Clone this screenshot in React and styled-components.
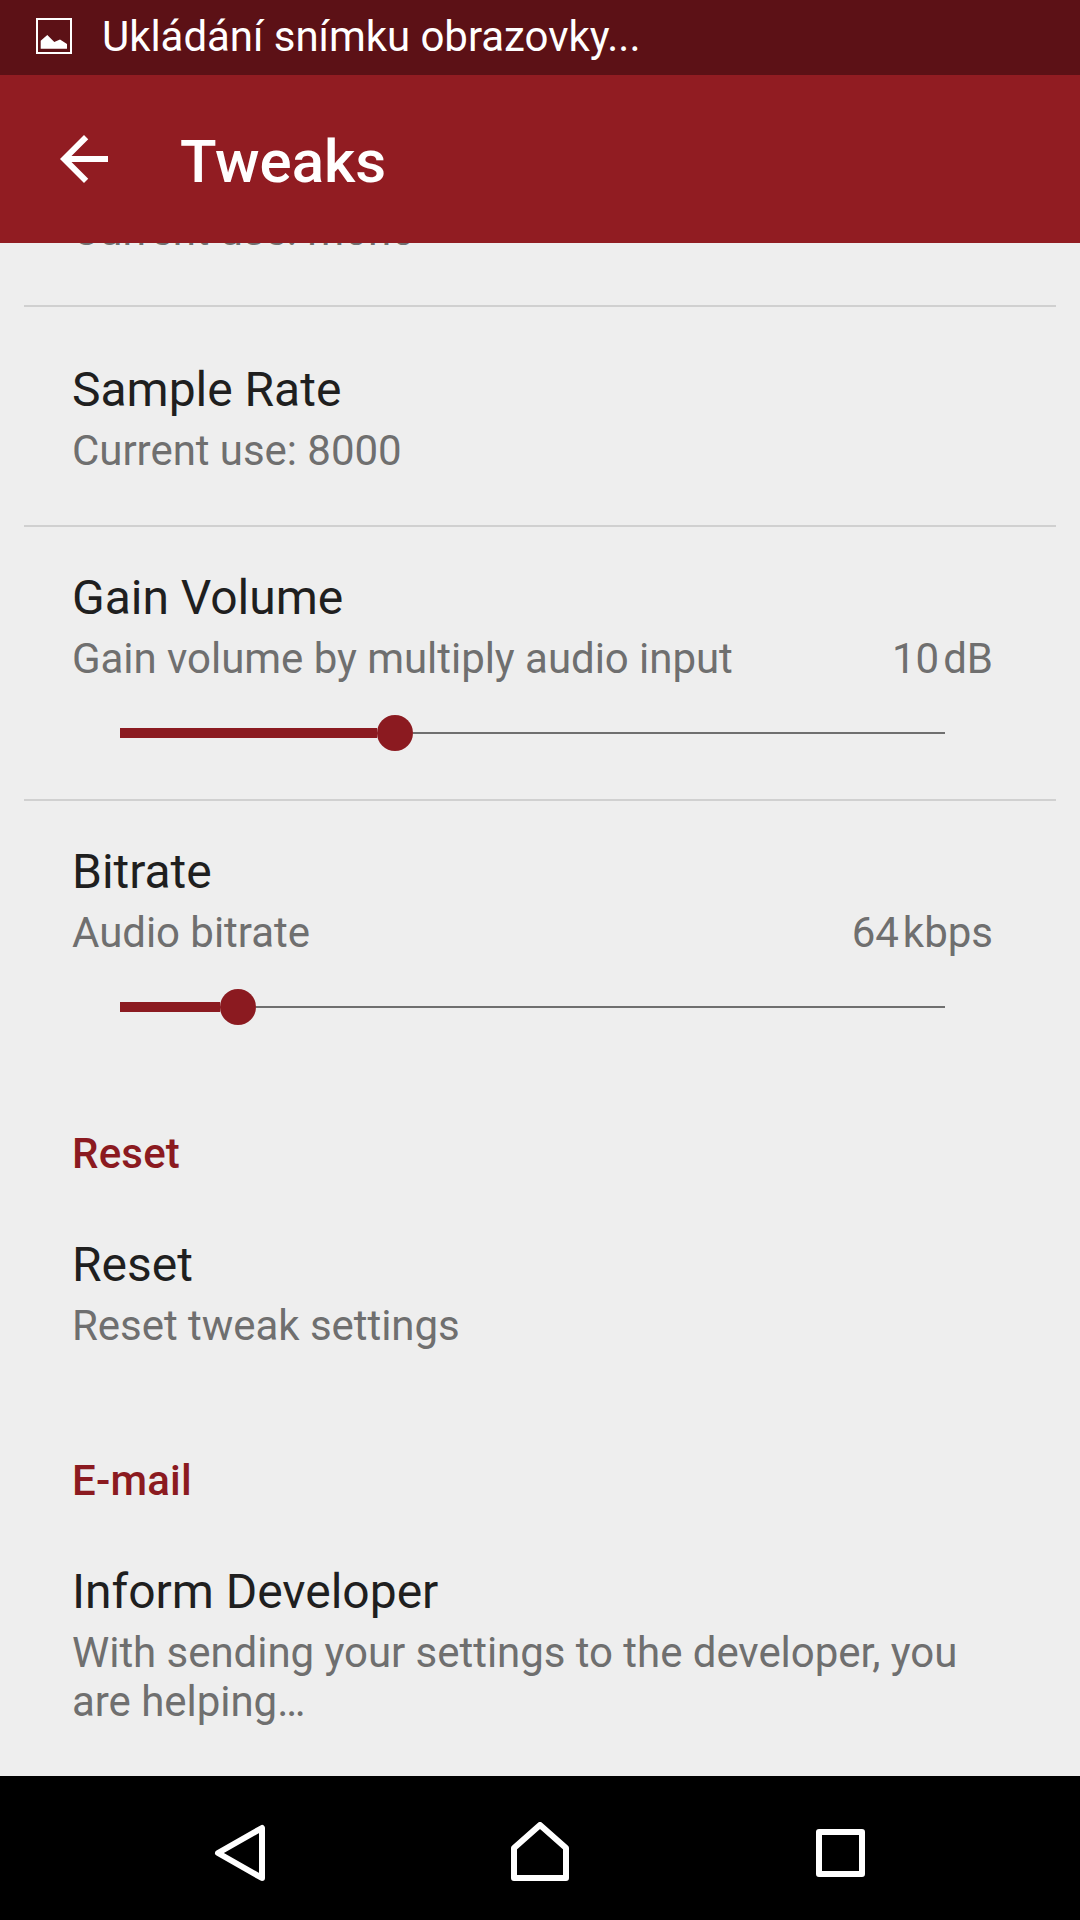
import React from "react";
import styled, { createGlobalStyle } from "styled-components";


const GlobalStyle = createGlobalStyle`
  * {
    box-sizing: border-box;
  }
  body {
    margin: 0;
    font-family: Roboto, "Liberation Sans", sans-serif;
  }
`

//Preference title with its summary, and the current value on the right if it has one
const Preference = ({ title, summary, value, unit }) => (
  <div>
    <Title>{title}</Title>
    <SummaryRow>
      <Summary>{summary}</Summary>
      {value && (
        <Value>
          <span>{value}</span>
          <span>{unit}</span>
        </Value>
      )}
    </SummaryRow>
  </div>
)

const Slider = ({ value, max }) => {
  const percent = (value / max) * 100;

  return (
    <Track>
      <TrackFill style={{ width: `calc(${percent}% - 18px)` }} />
      <Thumb />
      <TrackRest />
    </Track>
  )
}

const App = () => {
  return (
    <Screen>
      <GlobalStyle />
      <StatusBar>
        <svg width="36" height="36" viewBox="0 0 36 36" fill="none">
          <rect x="1" y="1" width="34" height="34" stroke="#fff" strokeWidth="2" />
          <path d="M4.7 30.7V22.7L11.3 17L18.3 24L24 21.5L31 26V30.7Z" fill="#fff" />
        </svg>
        <StatusText>Ukládání snímku obrazovky...</StatusText>
      </StatusBar>
      <Toolbar>
        <svg width="48" height="48" viewBox="0 0 16 16" fill="#fff">
          <path d="M16 7H3.83l5.59-5.59L8 0 0 8l8 8 1.41-1.41L3.83 9H16z" />
        </svg>
        <ToolbarTitle>Tweaks</ToolbarTitle>
      </Toolbar>
      <Content>
        <ClippedItem>
          <Summary>Current use: mono</Summary>
        </ClippedItem>
        <Divider />
        <Item $top={55} $bottom={50}>
          <Preference title="Sample Rate" summary="Current use: 8000" />
        </Item>
        <Divider />
        <Item $top={43} $bottom={48}>
          <Preference title="Gain Volume" summary="Gain volume by multiply audio input" value="10" unit="dB" />
          <Slider value={10} max={30} />
        </Item>
        <Divider />
        <Item $top={43} $bottom={48}>
          <Preference title="Bitrate" summary="Audio bitrate" value="64" unit="kbps" />
          <Slider value={1} max={7} />
        </Item>
        <Category>Reset</Category>
        <Item $top={55} $bottom={50}>
          <Preference title="Reset" summary="Reset tweak settings" />
        </Item>
        <Category>E-mail</Category>
        <Item $top={55} $bottom={50}>
          <Preference title="Inform Developer" summary="With sending your settings to the developer, you are helping…" />
        </Item>
      </Content>
      <NavBar>
        <svg width="60" height="60" viewBox="0 0 60 60" fill="none" stroke="#fff" strokeWidth="6" strokeLinejoin="round">
          <path d="M52 6V56L8 31Z" />
        </svg>
        <svg width="60" height="60" viewBox="0 0 60 60" fill="none" stroke="#fff" strokeWidth="6" strokeLinejoin="round">
          <path d="M4 56V26L30 3L56 26V56Z" />
        </svg>
        <svg width="60" height="60" viewBox="0 0 60 60" fill="none" stroke="#fff" strokeWidth="6" strokeLinejoin="round">
          <rect x="9" y="10" width="43" height="42" />
        </svg>
      </NavBar>
    </Screen>
  )
}

const Screen = styled.div`
  display: flex;
  flex-direction: column;
  width: 1080px;
  height: 1920px;
  overflow: hidden;
  background-color: #eeeeee;
`

const StatusBar = styled.div`
  display: flex;
  align-items: center;
  flex-shrink: 0;
  height: 75px;
  padding: 0 36px 3px;
  gap: 30px;
  background-color: #5c1116;
`

const StatusText = styled.span`
  padding-top: 2px;
  color: #fff;
  font-size: 42px;
  line-height: 50px;
  letter-spacing: -0.04px;
  white-space: nowrap;
`

const Toolbar = styled.header`
  display: flex;
  align-items: center;
  flex-shrink: 0;
  height: 168px;
  padding: 0 60px;
  gap: 72px;
  background-color: #911c22;
`

const ToolbarTitle = styled.h1`
  margin: 0;
  padding-top: 5px;
  color: #fff;
  font-size: 60px;
  font-weight: 500;
  line-height: 70px;
`

const Content = styled.main`
  flex: 1;
  min-height: 0;
  overflow: hidden;
`

/* Scrolled under the toolbar, only the bottom of its text shows */
const ClippedItem = styled.div`
  display: flex;
  align-items: flex-end;
  height: 62px;
  padding: 0 72px 50px;
`

const Divider = styled.hr`
  height: 2px;
  margin: 0 24px;
  border: none;
  background-color: #d0d0d0;
`

const Item = styled.section`
  padding: ${props => props.$top}px 72px ${props => props.$bottom}px;
`

const Title = styled.h2`
  margin: 0 0 8px;
  color: #1f1f1f;
  font-size: 48px;
  font-weight: 400;
  line-height: 56px;
  letter-spacing: -0.02px;
  white-space: nowrap;
`

const SummaryRow = styled.div`
  display: flex;
  justify-content: space-between;
  padding-right: 15px;
`

const Summary = styled.p`
  margin: 0;
  color: #6f6f6f;
  font-size: 42px;
  line-height: 49px;
  letter-spacing: -0.04px;
`

const Value = styled.div`
  display: flex;
  gap: 4px;
  color: #6f6f6f;
  font-size: 42px;
  line-height: 49px;
`

const Track = styled.div`
  display: flex;
  align-items: center;
  width: 825px;
  height: 36px;
  margin: 32px 0 0 48px;
`

const TrackFill = styled.div`
  height: 10px;
  background-color: #8b1a20;
`

const Thumb = styled.div`
  flex-shrink: 0;
  width: 36px;
  height: 36px;
  border-radius: 50%;
  background-color: #8b1a20;
`

const TrackRest = styled.div`
  flex: 1;
  height: 2px;
  background-color: #6f6f6f;
`

const Category = styled.h3`
  margin: 0;
  padding: 56px 72px 4px;
  color: #8b1a20;
  font-size: 42px;
  font-weight: 500;
  line-height: 49px;
  letter-spacing: 0.2px;
`

const NavBar = styled.nav`
  display: flex;
  justify-content: center;
  align-items: center;
  flex-shrink: 0;
  height: 144px;
  padding-top: 8px;
  gap: 240px;
  background-color: #000;
`

export default App;
